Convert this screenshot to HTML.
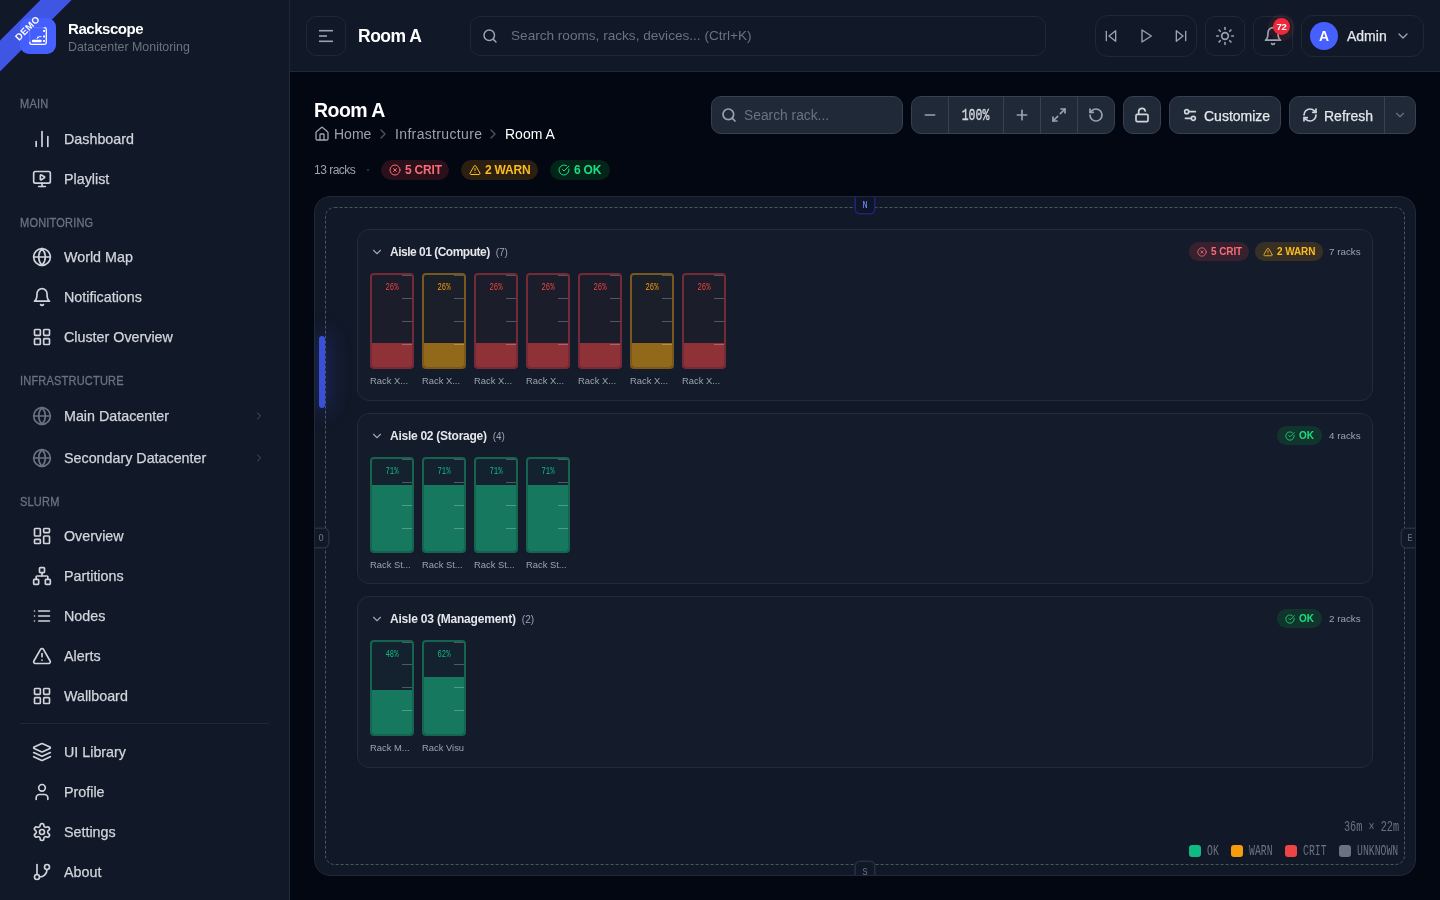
<!DOCTYPE html>
<html lang="en">
<head>
<meta charset="utf-8">
<title>Rackscope - Room A</title>
<style>
*{box-sizing:border-box;margin:0;padding:0}
html,body{width:1440px;height:900px;overflow:hidden;background:#030712;font-family:"Liberation Sans",sans-serif;color:#d1d5db}
#app{position:absolute;left:0;top:0;width:1440px;height:900px;overflow:hidden;will-change:transform}
.abs{position:absolute}
svg{display:block}
.ic{fill:none;stroke:currentColor;stroke-width:2;stroke-linecap:round;stroke-linejoin:round}
#sidebar{position:absolute;left:0;top:0;width:290px;height:900px;background:#111827;border-right:1px solid #1f2937;overflow:hidden}
#topbar{position:absolute;left:290px;top:0;width:1150px;height:72px;background:#111827;border-bottom:1px solid #1f2937}
.sec{position:absolute;left:20px;font-size:12px;line-height:14px;color:#6b7280;letter-spacing:.2px;text-transform:uppercase;transform-origin:left center;transform:scaleX(.92);-webkit-text-stroke:.3px #6b7280}
.nav{position:absolute;left:32px;height:20px;display:flex;align-items:center;color:#d1d5db;font-size:14.3px;white-space:nowrap}
.nav svg{width:20px;height:20px;margin-right:12px;color:#d1d5db}
.nav span{display:block;line-height:20px;-webkit-text-stroke:.25px #d1d5db}
.nav.dim svg{color:#6b7280}
.chev{position:absolute;left:253px;width:12px;height:12px;color:#4b5563}
.tbtn{position:absolute;top:16px;height:40px;border:1px solid #1f2937;border-radius:10px;background:#111827}

.pill{position:absolute;height:20px;border-radius:10px;display:flex;align-items:center;padding-left:8px;font-size:12px;white-space:nowrap}
.pill svg{width:12px;height:12px;margin-right:4px}
.pill b{font-weight:bold;line-height:20px;letter-spacing:-.2px}
.pill.crit{background:rgba(239,68,68,.165);color:#f96b76}
.pill.warn{background:rgba(245,158,11,.165);color:#fbbd1e}
.pill.ok{background:rgba(5,190,60,.165);color:#19df80}

.mono{font-family:"Liberation Mono",monospace}
.tb{position:absolute;top:96px;height:38px;background:#1f2937;border:1px solid #374151;border-radius:10px}
.tbd{position:absolute;top:97px;width:1px;height:36px;background:#374151}
#room{position:absolute;left:314px;top:196px;width:1102px;height:680px;background:#111827;border:1px solid #1f2937;border-radius:16px;overflow:hidden}
.door{left:4px;top:139px;width:6px;height:72px;border-radius:3px;background:#3b50d9;box-shadow:0 0 22px 4px rgba(70,95,255,.28)}
.card-l{width:20px;height:20px;border:1px solid #263040;box-shadow:0 0 0 .5px #263040;border-radius:5px;background:#111827;color:#6b7280;font-family:"Liberation Mono",monospace;font-size:8.6px;line-height:18px;text-align:center}
.card-l u{display:block;position:relative;text-decoration:none;transform:scaleY(1.25)}
.card-l.n{border-color:#1c2774;box-shadow:0 0 0 .5px #1c2774;color:#7592ff;background:#0f1528}

.aisle{position:absolute;left:42px;width:1016px;height:172px;border:1px solid #222c3c;border-radius:12px;background:#141b2b}
.at{font-size:12px;line-height:16px;color:#e5e7eb;white-space:nowrap}
.at b{font-weight:bold;letter-spacing:-.5px}
.at span{font-size:10px;color:#9ca3af;margin-left:6px}
.rc{font-size:9.8px;line-height:12px;color:#9ca3af;white-space:nowrap}
.pill.sm{height:19px;border-radius:10px;font-size:10px;padding-left:8px}
.pill.sm svg{width:10px;height:10px;margin-right:4px}
.pill.sm b{line-height:20px;letter-spacing:-.1px;padding-top:1px}
.rack{position:absolute;width:44px;height:96px;border:2px solid;border-radius:4px;overflow:hidden}
.rack i{position:absolute;display:block}
.rack .f{left:0;bottom:0;width:40px}
.rack .t{right:0;width:10px;height:1px;background:rgba(255,255,255,.25)}
.rack .p{position:absolute;left:0;top:7px;width:40px;text-align:center;font-family:"Liberation Mono",monospace;font-size:7.2px;line-height:10px;transform:scaleY(1.45)}
.rack.crit{border-color:#752b35;background:#1b1e2a;color:#ef4444}
.rack.crit .f{background:#8e3238}
.rack.warn{border-color:#79581f;background:#1b1f2a;color:#f59e0b}
.rack.warn .f{background:#92681b}
.rack.ok{border-color:#146450;background:#14212f;color:#10b981}
.rack.ok .f{background:#16785f}
.rl{position:absolute;width:44px;font-size:9.4px;line-height:12px;color:#9ca3af;white-space:nowrap;overflow:hidden}
.dm{font-size:10.2px;line-height:12px;color:#6b7280;white-space:pre}
.lg{font-size:9.8px;line-height:18px;color:#6b7280;transform-origin:left center;transform:scaleY(1.5)}
</style>
</head>
<body>
<div id="app">
<!-- SIDEBAR -->
<div id="sidebar">
  <div class="abs" style="left:20px;top:18px;width:36px;height:36px;border-radius:9px;background:#465fff"></div>
  <svg class="abs" style="left:29px;top:27px" width="18" height="18" viewBox="0 0 18 18" fill="none" stroke="#fff" stroke-linecap="round" stroke-linejoin="round"><rect x=".7" y=".7" width="16.6" height="16.6" rx="1.8" stroke-width="1.3"/><rect x="14.1" y="3" width="1.9" height="1.9" fill="#fff" stroke="none"/><rect x="14.1" y="8.5" width="1.9" height="1.9" fill="#fff" stroke="none"/><rect x="14.1" y="13" width="1.9" height="1.9" fill="#fff" stroke="none"/><path d="M4 14h7.6" stroke-width="2.4"/><path d="M8.2 11.6l.6-1.8 1 .8M10 9.6h2.2" stroke-width=".9"/></svg>
  <div class="abs" style="left:-41.75px;top:17.25px;width:140px;height:22px;background:rgba(70,95,255,.88);transform:rotate(-45deg);transform-origin:center;color:#fff;font-size:9.5px;font-weight:bold;letter-spacing:.4px;text-align:center;line-height:22px;padding-right:1px">DEMO</div>
  <div class="abs" style="left:68px;top:20px;font-size:15px;line-height:18px;font-weight:bold;color:#fff;letter-spacing:-.45px">Rackscope</div>
  <div class="abs" style="left:68px;top:40px;font-size:12.4px;line-height:14px;color:#6b7280">Datacenter Monitoring</div>

  <div class="sec" style="top:97px">Main</div>
  <div class="nav" style="top:129px"><svg class="ic" viewBox="0 0 24 24"><path d="M5 21v-6"/><path d="M12 21V3"/><path d="M19 21V9"/></svg><span>Dashboard</span></div>
  <div class="nav" style="top:169px"><svg class="ic" viewBox="0 0 24 24"><path d="M10 7.75a.75.75 0 0 1 1.142-.638l3.664 2.249a.75.75 0 0 1 0 1.278l-3.664 2.25a.75.75 0 0 1-1.142-.64z"/><path d="M12 17v4"/><path d="M8 21h8"/><rect x="2" y="3" width="20" height="14" rx="2"/></svg><span>Playlist</span></div>

  <div class="sec" style="top:216px">Monitoring</div>
  <div class="nav" style="top:247px"><svg class="ic" viewBox="0 0 24 24"><circle cx="12" cy="12" r="10"/><path d="M12 2a14.5 14.5 0 0 0 0 20 14.5 14.5 0 0 0 0-20"/><path d="M2 12h20"/></svg><span>World Map</span></div>
  <div class="nav" style="top:287px"><svg class="ic" viewBox="0 0 24 24"><path d="M6 8a6 6 0 0 1 12 0c0 7 3 9 3 9H3s3-2 3-9"/><path d="M10.3 21a1.94 1.94 0 0 0 3.4 0"/></svg><span>Notifications</span></div>
  <div class="nav" style="top:327px"><svg class="ic" viewBox="0 0 24 24"><rect width="7" height="7" x="3" y="3" rx="1"/><rect width="7" height="7" x="14" y="3" rx="1"/><rect width="7" height="7" x="14" y="14" rx="1"/><rect width="7" height="7" x="3" y="14" rx="1"/></svg><span>Cluster Overview</span></div>

  <div class="sec" style="top:374px">Infrastructure</div>
  <div class="nav dim" style="top:406px"><svg class="ic" viewBox="0 0 24 24"><circle cx="12" cy="12" r="10"/><path d="M12 2a14.5 14.5 0 0 0 0 20 14.5 14.5 0 0 0 0-20"/><path d="M2 12h20"/></svg><span>Main Datacenter</span></div>
  <svg class="chev ic" style="top:410px" viewBox="0 0 24 24"><path d="m9 18 6-6-6-6"/></svg>
  <div class="nav dim" style="top:448px"><svg class="ic" viewBox="0 0 24 24"><circle cx="12" cy="12" r="10"/><path d="M12 2a14.5 14.5 0 0 0 0 20 14.5 14.5 0 0 0 0-20"/><path d="M2 12h20"/></svg><span>Secondary Datacenter</span></div>
  <svg class="chev ic" style="top:452px" viewBox="0 0 24 24"><path d="m9 18 6-6-6-6"/></svg>

  <div class="sec" style="top:495px">Slurm</div>
  <div class="nav" style="top:526px"><svg class="ic" viewBox="0 0 24 24"><rect width="7" height="9" x="3" y="3" rx="1"/><rect width="7" height="5" x="14" y="3" rx="1"/><rect width="7" height="9" x="14" y="12" rx="1"/><rect width="7" height="5" x="3" y="16" rx="1"/></svg><span>Overview</span></div>
  <div class="nav" style="top:566px"><svg class="ic" viewBox="0 0 24 24"><rect x="16" y="16" width="6" height="6" rx="1"/><rect x="2" y="16" width="6" height="6" rx="1"/><rect x="9" y="2" width="6" height="6" rx="1"/><path d="M5 16v-3a1 1 0 0 1 1-1h12a1 1 0 0 1 1 1v3"/><path d="M12 12V8"/></svg><span>Partitions</span></div>
  <div class="nav" style="top:606px"><svg class="ic" viewBox="0 0 24 24"><path d="M8 6h13"/><path d="M8 12h13"/><path d="M8 18h13"/><path d="M3 6h.01"/><path d="M3 12h.01"/><path d="M3 18h.01"/></svg><span>Nodes</span></div>
  <div class="nav" style="top:646px"><svg class="ic" viewBox="0 0 24 24"><path d="m21.73 18-8-14a2 2 0 0 0-3.48 0l-8 14A2 2 0 0 0 4 21h16a2 2 0 0 0 1.73-3"/><path d="M12 9v4"/><path d="M12 17h.01"/></svg><span>Alerts</span></div>
  <div class="nav" style="top:686px"><svg class="ic" viewBox="0 0 24 24"><rect width="7" height="7" x="3" y="3" rx="1"/><rect width="7" height="7" x="14" y="3" rx="1"/><rect width="7" height="7" x="14" y="14" rx="1"/><rect width="7" height="7" x="3" y="14" rx="1"/></svg><span>Wallboard</span></div>

  <div class="abs" style="left:20px;top:723px;width:249px;height:1px;background:#1f2937"></div>
  <div class="nav" style="top:742px"><svg class="ic" viewBox="0 0 24 24"><path d="m12.83 2.18a2 2 0 0 0-1.66 0L2.6 6.08a1 1 0 0 0 0 1.83l8.58 3.91a2 2 0 0 0 1.66 0l8.58-3.9a1 1 0 0 0 0-1.83Z"/><path d="m22 17.65-9.17 4.16a2 2 0 0 1-1.66 0L2 17.65"/><path d="m22 12.65-9.17 4.16a2 2 0 0 1-1.66 0L2 12.65"/></svg><span>UI Library</span></div>
  <div class="nav" style="top:782px"><svg class="ic" viewBox="0 0 24 24"><path d="M19 21v-2a4 4 0 0 0-4-4H9a4 4 0 0 0-4 4v2"/><circle cx="12" cy="7" r="4"/></svg><span>Profile</span></div>
  <div class="nav" style="top:822px"><svg class="ic" viewBox="0 0 24 24"><path d="M12.22 2h-.44a2 2 0 0 0-2 2v.18a2 2 0 0 1-1 1.73l-.43.25a2 2 0 0 1-2 0l-.15-.08a2 2 0 0 0-2.73.73l-.22.38a2 2 0 0 0 .73 2.73l.15.1a2 2 0 0 1 1 1.72v.51a2 2 0 0 1-1 1.74l-.15.09a2 2 0 0 0-.73 2.73l.22.38a2 2 0 0 0 2.73.73l.15-.08a2 2 0 0 1 2 0l.43.25a2 2 0 0 1 1 1.73V20a2 2 0 0 0 2 2h.44a2 2 0 0 0 2-2v-.18a2 2 0 0 1 1-1.73l.43-.25a2 2 0 0 1 2 0l.15.08a2 2 0 0 0 2.73-.73l.22-.39a2 2 0 0 0-.73-2.73l-.15-.08a2 2 0 0 1-1-1.74v-.5a2 2 0 0 1 1-1.74l.15-.09a2 2 0 0 0 .73-2.73l-.22-.38a2 2 0 0 0-2.73-.73l-.15.08a2 2 0 0 1-2 0l-.43-.25a2 2 0 0 1-1-1.73V4a2 2 0 0 0-2-2z"/><circle cx="12" cy="12" r="3"/></svg><span>Settings</span></div>
  <div class="nav" style="top:862px"><svg class="ic" viewBox="0 0 24 24"><line x1="6" x2="6" y1="3" y2="15"/><circle cx="18" cy="6" r="3"/><circle cx="6" cy="18" r="3"/><path d="M18 9a9 9 0 0 1-9 9"/></svg><span>About</span></div>
</div>

<!-- TOPBAR -->
<div id="topbar">
  <div class="tbtn" style="left:16px;width:40px"></div>
  <svg class="abs" style="left:28px;top:28px" width="16" height="16" viewBox="0 0 16 16" fill="none" stroke="#9ca3af" stroke-width="1.6" stroke-linecap="butt"><path d="M1 2.7h14"/><path d="M1 8h8"/><path d="M1 13.3h14"/></svg>
  <div class="abs" style="left:68px;top:25px;font-size:17.5px;line-height:22px;font-weight:bold;color:#fff;white-space:nowrap;letter-spacing:-.5px">Room A</div>
  <div class="tbtn" style="left:180px;width:576px"></div>
  <svg class="abs ic" style="left:191px;top:27px;color:#9ca3af" width="18" height="18" viewBox="0 0 24 24"><circle cx="11" cy="11" r="7"/><path d="m20 20-3.5-3.5"/></svg>
  <div class="abs" style="left:221px;top:27px;font-size:13.6px;line-height:18px;color:#6b7280;white-space:nowrap">Search rooms, racks, devices... (Ctrl+K)</div>

  <!-- playback group -->
  <div class="tbtn" style="left:805px;top:15px;width:102px;height:42px;border-radius:13px"></div>
  <svg class="abs ic" style="left:813px;top:28px;color:#9ca3af;stroke-width:2" width="16" height="16" viewBox="0 0 24 24"><polygon points="19 20 9 12 19 4 19 20"/><line x1="5" x2="5" y1="19" y2="5"/></svg>
  <svg class="abs ic" style="left:848px;top:28px;color:#9ca3af;stroke-width:2" width="16" height="16" viewBox="0 0 24 24"><polygon points="6 3 20 12 6 21 6 3"/></svg>
  <svg class="abs ic" style="left:883px;top:28px;color:#9ca3af;stroke-width:2" width="16" height="16" viewBox="0 0 24 24"><polygon points="5 4 15 12 5 20 5 4"/><line x1="19" x2="19" y1="5" y2="19"/></svg>
  <!-- theme -->
  <div class="tbtn" style="left:915px;width:40px"></div>
  <svg class="abs ic" style="left:925px;top:26px;color:#9ca3af" width="20" height="20" viewBox="0 0 24 24"><circle cx="12" cy="12" r="4"/><path d="M12 2v2"/><path d="M12 20v2"/><path d="m4.93 4.93 1.41 1.41"/><path d="m17.66 17.66 1.41 1.41"/><path d="M2 12h2"/><path d="M20 12h2"/><path d="m6.34 17.66-1.41 1.41"/><path d="m19.07 4.93-1.41 1.41"/></svg>
  <!-- bell -->
  <div class="tbtn" style="left:963px;width:40px"></div>
  <svg class="abs ic" style="left:973px;top:26px;color:#9ca3af" width="20" height="20" viewBox="0 0 24 24"><path d="M6 8a6 6 0 0 1 12 0c0 7 3 9 3 9H3s3-2 3-9"/><path d="M10.3 21a1.94 1.94 0 0 0 3.4 0"/></svg>
  <div class="abs" style="left:977.5px;top:13.5px;width:27px;height:27px;border-radius:14px;background:rgba(239,68,68,.10)"></div>
  <div class="abs" style="left:983px;top:18px;width:17px;height:17px;border-radius:9px;background:#f0283c;color:#fff;font-size:9.5px;font-weight:bold;line-height:17px;text-align:center;letter-spacing:-.3px">72</div>
  <!-- admin -->
  <div class="tbtn" style="left:1011px;top:15px;width:123px;height:42px;border-radius:12px"></div>
  <div class="abs" style="left:1020px;top:22px;width:28px;height:28px;border-radius:14px;background:#465fff;color:#fff;font-size:14px;font-weight:bold;line-height:28px;text-align:center">A</div>
  <div class="abs" style="left:1057px;top:27px;font-size:14px;line-height:18px;color:#e5e7eb;white-space:nowrap;-webkit-text-stroke:.25px #e5e7eb">Admin</div>
  <svg class="abs ic" style="left:1105px;top:28px;color:#9ca3af" width="16" height="16" viewBox="0 0 24 24"><path d="m6 9 6 6 6-6"/></svg>
</div>

<!-- PAGE HEADER -->
<div class="abs" style="left:314px;top:98px;font-size:19.5px;line-height:24px;font-weight:bold;color:#fff;white-space:nowrap;letter-spacing:-.55px">Room A</div>
<svg class="abs ic" style="left:314px;top:126px;color:#9ca3af" width="16" height="16" viewBox="0 0 24 24"><path d="M15 21v-8a1 1 0 0 0-1-1h-4a1 1 0 0 0-1 1v8"/><path d="M3 10a2 2 0 0 1 .709-1.528l7-5.999a2 2 0 0 1 2.582 0l7 5.999A2 2 0 0 1 21 10v9a2 2 0 0 1-2 2H5a2 2 0 0 1-2-2z"/></svg>
<div class="abs" style="left:334px;top:125px;font-size:14px;line-height:18px;color:#9ca3af;white-space:nowrap">Home</div>
<svg class="abs ic" style="left:375px;top:126px;color:#4b5563" width="16" height="16" viewBox="0 0 24 24"><path d="m9 18 6-6-6-6"/></svg>
<div class="abs" style="left:395px;top:125px;font-size:14px;line-height:18px;color:#9ca3af;white-space:nowrap;letter-spacing:.35px">Infrastructure</div>
<svg class="abs ic" style="left:485px;top:126px;color:#4b5563" width="16" height="16" viewBox="0 0 24 24"><path d="m9 18 6-6-6-6"/></svg>
<div class="abs" style="left:505px;top:125px;font-size:14px;line-height:18px;color:#fff;white-space:nowrap">Room A</div>

<div class="abs" style="left:314px;top:162px;font-size:12px;line-height:16px;color:#9ca3af;white-space:nowrap;letter-spacing:-.5px">13 racks</div>
<div class="abs" style="left:367px;top:169px;width:2px;height:2px;border-radius:1px;background:#374151"></div>
<div class="pill crit" style="left:381px;top:160px;width:68px"><svg class="ic" viewBox="0 0 24 24"><circle cx="12" cy="12" r="10"/><path d="m15 9-6 6"/><path d="m9 9 6 6"/></svg><b>5 CRIT</b></div>
<div class="pill warn" style="left:461px;top:160px;width:77px"><svg class="ic" viewBox="0 0 24 24"><path d="m21.73 18-8-14a2 2 0 0 0-3.48 0l-8 14A2 2 0 0 0 4 21h16a2 2 0 0 0 1.73-3"/><path d="M12 9v4"/><path d="M12 17h.01"/></svg><b>2 WARN</b></div>
<div class="pill ok" style="left:550px;top:160px;width:60px"><svg class="ic" viewBox="0 0 24 24"><path d="M21.801 10A10 10 0 1 1 17 3.335"/><path d="m9 11 3 3L22 4"/></svg><b>6 OK</b></div>

<!-- TOOLBAR -->
<div class="tb" style="left:711px;width:192px"></div>
<svg class="abs ic" style="left:721px;top:107px;color:#9ca3af;stroke-width:2.5" width="16" height="16" viewBox="0 0 24 24"><circle cx="11" cy="11" r="8"/><path d="m21 21-4.3-4.3"/></svg>
<div class="abs" style="left:744px;top:107px;font-size:13.8px;line-height:18px;color:#6b7280;white-space:nowrap">Search rack...</div>
<div class="tb" style="left:911px;width:204px"></div>
<div class="tbd" style="left:948px"></div><div class="tbd" style="left:1003px"></div><div class="tbd" style="left:1040px"></div><div class="tbd" style="left:1077px"></div>
<svg class="abs ic" style="left:922px;top:107px;color:#9ca3af;stroke-width:2.5" width="16" height="16" viewBox="0 0 24 24"><path d="M5 12h14"/></svg>
<div class="abs mono" style="left:948px;top:106px;width:55px;text-align:center;font-size:11.5px;line-height:18px;color:#d1d5db;transform:scaleY(1.5);-webkit-text-stroke:.3px #d1d5db">100%</div>
<svg class="abs ic" style="left:1014px;top:107px;color:#9ca3af;stroke-width:2.5" width="16" height="16" viewBox="0 0 24 24"><path d="M5 12h14"/><path d="M12 5v14"/></svg>
<svg class="abs ic" style="left:1051px;top:107px;color:#9ca3af;stroke-width:2.5" width="16" height="16" viewBox="0 0 24 24"><polyline points="15 3 21 3 21 9"/><polyline points="9 21 3 21 3 15"/><line x1="21" x2="14" y1="3" y2="10"/><line x1="3" x2="10" y1="21" y2="14"/></svg>
<svg class="abs ic" style="left:1088px;top:107px;color:#9ca3af;stroke-width:2.5" width="16" height="16" viewBox="0 0 24 24"><path d="M3 12a9 9 0 1 0 9-9 9.75 9.75 0 0 0-6.74 2.74L3 8"/><path d="M3 3v5h5"/></svg>
<div class="tb" style="left:1123px;width:38px"></div>
<svg class="abs ic" style="left:1134px;top:107px;color:#d1d5db;stroke-width:2.5" width="16" height="16" viewBox="0 0 24 24"><rect width="18" height="11" x="3" y="11" rx="2" ry="2"/><path d="M7 11V7a5 5 0 0 1 9.9-1"/></svg>
<div class="tb" style="left:1169px;width:112px"></div>
<svg class="abs ic" style="left:1182px;top:107px;color:#d1d5db;stroke-width:2.5" width="16" height="16" viewBox="0 0 24 24"><path d="M20 7h-9"/><path d="M14 17H5"/><circle cx="17" cy="17" r="3"/><circle cx="7" cy="7" r="3"/></svg>
<div class="abs" style="left:1204px;top:107px;font-size:14px;line-height:18px;color:#e5e7eb;white-space:nowrap;-webkit-text-stroke:.25px #e5e7eb">Customize</div>
<div class="tb" style="left:1289px;width:127px"></div>
<div class="tbd" style="left:1384px"></div>
<svg class="abs ic" style="left:1302px;top:107px;color:#d1d5db;stroke-width:2.5" width="16" height="16" viewBox="0 0 24 24"><path d="M3 12a9 9 0 0 1 9-9 9.75 9.75 0 0 1 6.74 2.74L21 8"/><path d="M21 3v5h-5"/><path d="M21 12a9 9 0 0 1-9 9 9.75 9.75 0 0 1-6.74-2.74L3 16"/><path d="M8 16H3v5"/></svg>
<div class="abs" style="left:1324px;top:107px;font-size:14px;line-height:18px;color:#e5e7eb;white-space:nowrap;-webkit-text-stroke:.25px #e5e7eb">Refresh</div>
<svg class="abs ic" style="left:1393px;top:108px;color:#6b7280;stroke-width:2" width="14" height="14" viewBox="0 0 24 24"><path d="m6 9 6 6 6-6"/></svg>

<!-- ROOM -->
<div id="room">
  <svg class="abs" style="left:0;top:0" width="1100" height="678"><rect x="10.5" y="10.5" width="1079" height="657" rx="9" ry="9" fill="none" stroke="#4b5563" stroke-width="1" stroke-dasharray="3 2"/></svg>
<div class="aisle" style="top:32px"></div>
<svg class="abs ic" style="left:55px;top:48px;color:#9ca3af" width="14" height="14" viewBox="0 0 24 24"><path d="m6 9 6 6 6-6"/></svg>
<div class="abs at" style="left:75px;top:47px"><b>Aisle 01 (Compute)</b><span>(7)</span></div>
<div class="pill sm crit" style="left:874px;top:45px;width:60px"><svg class="ic" viewBox="0 0 24 24"><circle cx="12" cy="12" r="10"/><path d="m15 9-6 6"/><path d="m9 9 6 6"/></svg><b>5 CRIT</b></div>
<div class="pill sm warn" style="left:940px;top:45px;width:68px"><svg class="ic" viewBox="0 0 24 24"><path d="m21.73 18-8-14a2 2 0 0 0-3.48 0l-8 14A2 2 0 0 0 4 21h16a2 2 0 0 0 1.73-3"/><path d="M12 9v4"/><path d="M12 17h.01"/></svg><b>2 WARN</b></div>
<div class="abs rc" style="left:1014px;top:49px">7 racks</div>
<div class="rack crit" style="left:55px;top:76px"><i class="f" style="height:24px"></i><i class="t" style="top:0"></i><i class="t" style="top:23px"></i><i class="t" style="top:46px"></i><i class="t" style="top:69px"></i><span class="p">26%</span></div><div class="rl" style="left:55px;top:178px">Rack X...</div>
<div class="rack warn" style="left:107px;top:76px"><i class="f" style="height:24px"></i><i class="t" style="top:0"></i><i class="t" style="top:23px"></i><i class="t" style="top:46px"></i><i class="t" style="top:69px"></i><span class="p">26%</span></div><div class="rl" style="left:107px;top:178px">Rack X...</div>
<div class="rack crit" style="left:159px;top:76px"><i class="f" style="height:24px"></i><i class="t" style="top:0"></i><i class="t" style="top:23px"></i><i class="t" style="top:46px"></i><i class="t" style="top:69px"></i><span class="p">26%</span></div><div class="rl" style="left:159px;top:178px">Rack X...</div>
<div class="rack crit" style="left:211px;top:76px"><i class="f" style="height:24px"></i><i class="t" style="top:0"></i><i class="t" style="top:23px"></i><i class="t" style="top:46px"></i><i class="t" style="top:69px"></i><span class="p">26%</span></div><div class="rl" style="left:211px;top:178px">Rack X...</div>
<div class="rack crit" style="left:263px;top:76px"><i class="f" style="height:24px"></i><i class="t" style="top:0"></i><i class="t" style="top:23px"></i><i class="t" style="top:46px"></i><i class="t" style="top:69px"></i><span class="p">26%</span></div><div class="rl" style="left:263px;top:178px">Rack X...</div>
<div class="rack warn" style="left:315px;top:76px"><i class="f" style="height:24px"></i><i class="t" style="top:0"></i><i class="t" style="top:23px"></i><i class="t" style="top:46px"></i><i class="t" style="top:69px"></i><span class="p">26%</span></div><div class="rl" style="left:315px;top:178px">Rack X...</div>
<div class="rack crit" style="left:367px;top:76px"><i class="f" style="height:24px"></i><i class="t" style="top:0"></i><i class="t" style="top:23px"></i><i class="t" style="top:46px"></i><i class="t" style="top:69px"></i><span class="p">26%</span></div><div class="rl" style="left:367px;top:178px">Rack X...</div>
<div class="aisle" style="top:216px;height:171px"></div>
<svg class="abs ic" style="left:55px;top:232px;color:#9ca3af" width="14" height="14" viewBox="0 0 24 24"><path d="m6 9 6 6 6-6"/></svg>
<div class="abs at" style="left:75px;top:231px"><b style="letter-spacing:-.26px">Aisle 02 (Storage)</b><span>(4)</span></div>
<div class="pill sm ok" style="left:962px;top:229px;width:45px"><svg class="ic" viewBox="0 0 24 24"><path d="M21.801 10A10 10 0 1 1 17 3.335"/><path d="m9 11 3 3L22 4"/></svg><b>OK</b></div>
<div class="abs rc" style="left:1014px;top:233px">4 racks</div>
<div class="rack ok" style="left:55px;top:260px"><i class="f" style="height:66px"></i><i class="t" style="top:0"></i><i class="t" style="top:23px"></i><i class="t" style="top:46px"></i><i class="t" style="top:69px"></i><span class="p">71%</span></div><div class="rl" style="left:55px;top:362px">Rack St...</div>
<div class="rack ok" style="left:107px;top:260px"><i class="f" style="height:66px"></i><i class="t" style="top:0"></i><i class="t" style="top:23px"></i><i class="t" style="top:46px"></i><i class="t" style="top:69px"></i><span class="p">71%</span></div><div class="rl" style="left:107px;top:362px">Rack St...</div>
<div class="rack ok" style="left:159px;top:260px"><i class="f" style="height:66px"></i><i class="t" style="top:0"></i><i class="t" style="top:23px"></i><i class="t" style="top:46px"></i><i class="t" style="top:69px"></i><span class="p">71%</span></div><div class="rl" style="left:159px;top:362px">Rack St...</div>
<div class="rack ok" style="left:211px;top:260px"><i class="f" style="height:66px"></i><i class="t" style="top:0"></i><i class="t" style="top:23px"></i><i class="t" style="top:46px"></i><i class="t" style="top:69px"></i><span class="p">71%</span></div><div class="rl" style="left:211px;top:362px">Rack St...</div>
<div class="aisle" style="top:399px"></div>
<svg class="abs ic" style="left:55px;top:415px;color:#9ca3af" width="14" height="14" viewBox="0 0 24 24"><path d="m6 9 6 6 6-6"/></svg>
<div class="abs at" style="left:75px;top:414px"><b style="letter-spacing:-.2px">Aisle 03 (Management)</b><span>(2)</span></div>
<div class="pill sm ok" style="left:962px;top:412px;width:45px"><svg class="ic" viewBox="0 0 24 24"><path d="M21.801 10A10 10 0 1 1 17 3.335"/><path d="m9 11 3 3L22 4"/></svg><b>OK</b></div>
<div class="abs rc" style="left:1014px;top:416px">2 racks</div>
<div class="rack ok" style="left:55px;top:443px"><i class="f" style="height:44px"></i><i class="t" style="top:0"></i><i class="t" style="top:22px"></i><i class="t" style="top:45px"></i><i class="t" style="top:68px"></i><span class="p">48%</span></div><div class="rl" style="left:55px;top:545px">Rack M...</div>
<div class="rack ok" style="left:107px;top:443px"><i class="f" style="height:57px"></i><i class="t" style="top:0"></i><i class="t" style="top:22px"></i><i class="t" style="top:45px"></i><i class="t" style="top:68px"></i><span class="p">62%</span></div><div class="rl" style="left:107px;top:545px">Rack Visu</div>
<div class="abs mono dm" style="left:1029px;top:625px;transform-origin:left center;transform:scaleY(1.45)">36m × 22m</div>
<div class="abs" style="left:874px;top:648px;width:12px;height:12px;border-radius:3px;background:#10b981"></div><div class="abs mono lg" style="left:892px;top:646px">OK</div>
<div class="abs" style="left:916px;top:648px;width:12px;height:12px;border-radius:3px;background:#f59e0b"></div><div class="abs mono lg" style="left:934px;top:646px">WARN</div>
<div class="abs" style="left:970px;top:648px;width:12px;height:12px;border-radius:3px;background:#ef4444"></div><div class="abs mono lg" style="left:988px;top:646px">CRIT</div>
<div class="abs" style="left:1024px;top:648px;width:12px;height:12px;border-radius:3px;background:#6b7280"></div><div class="abs mono lg" style="left:1042px;top:646px">UNKNOWN</div>
  <div class="abs door"></div>
  <div class="abs card-l n" style="left:540px;top:-3px"><u style="top:.5px">N</u></div>
  <div class="abs card-l" style="left:540px;top:664px"><u style="top:1.2px">S</u></div>
  <div class="abs card-l" style="left:-6px;top:331px"><u style="left:2px;top:0">O</u></div>
  <div class="abs card-l" style="left:1086px;top:331px"><u style="left:-1px;top:0">E</u></div>
</div>
</div>
</body>
</html>
